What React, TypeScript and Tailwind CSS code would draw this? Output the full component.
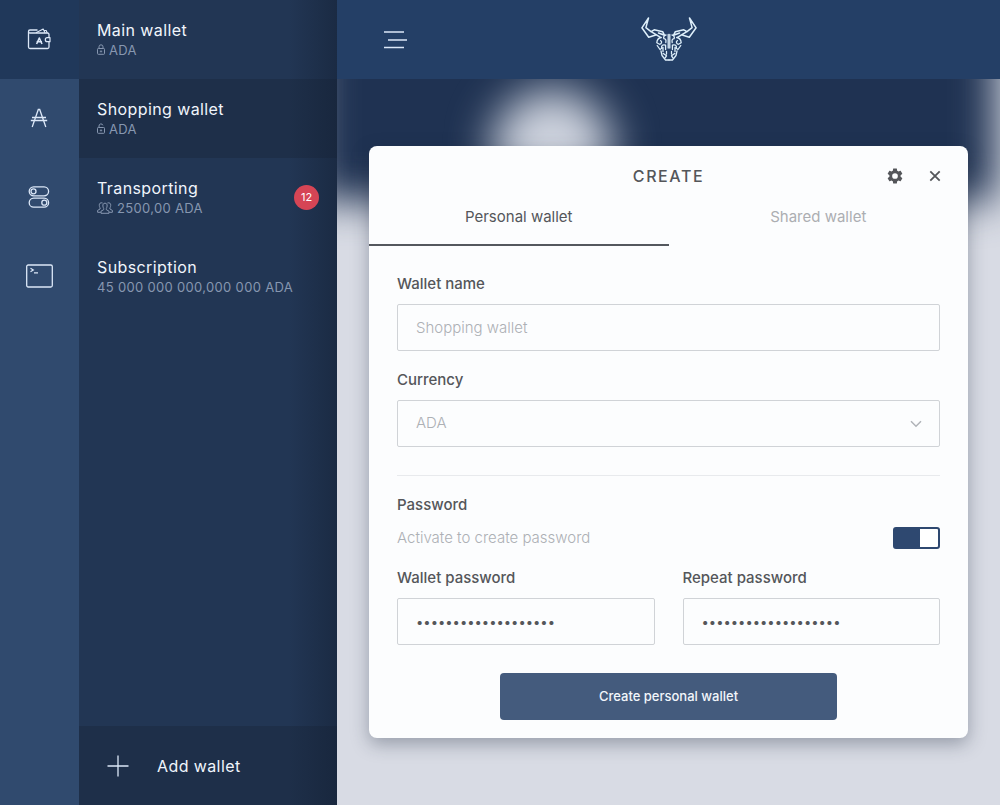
import { useState, type ReactNode } from "react";

function WalletIcon() {
  return (
    <svg width="24" height="22" viewBox="0 0 24 22" fill="none" stroke="#dce8f8" strokeWidth="1.3" strokeLinejoin="round">
      <path d="M22 9V6.500A1.500 1.500 0 0 0 20.500 5H3A1.500 1.500 0 0 1 3 2H10.500M1.500 3.500V19A1.500 1.500 0 0 0 3 20.500H20.500A1.500 1.500 0 0 0 22 19V14" />
      <path d="M9 4.800 16.200 1 18 4.800M17 2.500H19.200L20.200 5" strokeWidth="1.100" />
      <path d="M23 9.700H20.300A2 2 0 0 0 20.300 13.700H23Z" strokeWidth="1.200" />
      <path d="M9.600 16 12.300 10 15 16M9.600 13.800H15" strokeWidth="1.600" />
    </svg>
  );
}

function AdaIcon() {
  return (
    <svg width="18" height="20" viewBox="0 0 18 20" fill="none" stroke="#dce8f8" strokeWidth="1.300">
      <path d="M2.200 19 8.300 1.500H9.700L15.800 19M2 9.500H16M.8 12.500H17.200" />
    </svg>
  );
}

function TogglesIcon() {
  return (
    <svg width="22" height="22" viewBox="0 0 22 22" fill="none" stroke="#dce8f8" strokeWidth="1.300">
      <rect x="1.200" y="0.800" width="19.400" height="9" rx="4.500" />
      <circle cx="5.500" cy="5.300" r="2.500" />
      <rect x="1.200" y="12.200" width="19.400" height="9" rx="4.500" />
      <circle cx="16.300" cy="16.700" r="2.500" />
    </svg>
  );
}

function TerminalIcon() {
  return (
    <svg width="27" height="24" viewBox="0 0 27 24" fill="none" stroke="#dce8f8" strokeWidth="1.300">
      <rect x="0.700" y="1" width="25.600" height="22" rx="1.500" />
      <path d="M4.500 4.200 7.300 6 4.500 7.800M8 8.800H12" strokeWidth="1.200" />
    </svg>
  );
}

function LockIcon({ open = false }: { open?: boolean }) {
  return (
    <svg width="8" height="11" viewBox="0 0 8 11" fill="none" stroke="currentColor" strokeWidth="1">
      <rect x="0.500" y="4.500" width="7" height="5.800" rx="0.800" />
      <path d={open ? "M2 4.500V3A2 2 0 0 1 5.900 2.300" : "M2 4.500V2.800A2 2 0 0 1 6 2.800V4.500"} />
      <path d="M4 6.300V8.500M2.800 7.400H5.200" strokeWidth="0.800" />
    </svg>
  );
}

function PeopleIcon() {
  return (
    <svg width="16" height="12" viewBox="0 0 16 12" fill="none" stroke="currentColor" strokeWidth="1" strokeLinejoin="round">
      <path d="M8 1.200C6.300 1.200 5.700 2.400 5.900 4 6 5.400 6.700 6.500 6.700 6.500V7.700L4 9.200V11.300H12V9.200L9.300 7.700V6.500S10 5.400 10.100 4C10.300 2.400 9.700 1.200 8 1.200Z" />
      <path d="M5.600 1C3.500.2 2 1.500 2.300 3.500 2.400 5 3.100 6 3.100 6V7L.6 8.400V10.300H3.800M10.400 1C12.500.2 14 1.500 13.700 3.500 13.600 5 12.900 6 12.900 6V7L15.400 8.400V10.300H12.200" />
    </svg>
  );
}

function BullHalf() {
  return (
    <>
      <path d="M7.500 1 .9 10.800 7.700 20.300 15.500 17.800 19.500 20.300M7.500 1 4.900 10.600 10 14.700 13.200 12.800 21.800 14.800 23.500 18.300 17.500 16M10.500 14.800 15.500 17.800" strokeWidth="1.500" />
      <path d="M27.200 17.500V31M25 18C23 18.300 22.200 20 22.900 21.700 24.800 21.800 25.300 23.400 24.800 25.500M20.300 20.500C17.600 20.800 16 23 15.800 25.800L18.500 27.300C20.800 27 21.300 24.500 19.600 23.600M16.200 28.500 19 32.500 20.700 31.300C20 28.500 22 27.200 24.600 28.200V32.500M22 30.500V34.500M20 34 21 38.500 24.500 43H28M22.300 36.500 25.500 38.800 24.300 40.700M25.500 34.500V37" />
    </>
  );
}

function BullLogo() {
  return (
    <svg width="56" height="45" viewBox="0 0 56 45" fill="none" stroke="#dff0fb" strokeWidth="1.300" strokeLinejoin="round" strokeLinecap="round">
      <BullHalf />
      <g transform="matrix(-1 0 0 1 56 0)">
        <BullHalf />
      </g>
    </svg>
  );
}

function GearIcon() {
  return (
    <svg width="18" height="18" viewBox="0 0 24 24" fill="#54565a">
      <path d="M19.430 12.980c.04-.32.07-.64.07-.98s-.03-.66-.07-.98l2.110-1.650c.19-.15.24-.42.12-.64l-2-3.460c-.12-.22-.39-.3-.61-.22l-2.490 1c-.52-.4-1.080-.73-1.690-.98l-.38-2.650C14.460 2.180 14.250 2 14 2h-4c-.25 0-.46.18-.49.42l-.38 2.650c-.61.25-1.170.59-1.690.98l-2.490-1c-.23-.09-.49 0-.61.22l-2 3.460c-.13.22-.07.49.12.64l2.110 1.650c-.04.32-.07.65-.07.98s.03.66.07.98l-2.110 1.650c-.19.15-.24.42-.12.64l2 3.460c.12.22.39.3.61.22l2.490-1c.52.4 1.080.73 1.690.98l.38 2.650c.03.24.24.42.49.42h4c.25 0 .46-.18.49-.42l.38-2.650c.61-.25 1.170-.59 1.690-.98l2.490 1c.23.09.49 0 .61-.22l2-3.460c.12-.22.07-.49-.12-.64l-2.110-1.650zM12 15.800a3.800 3.800 0 1 1 0-7.600 3.800 3.800 0 0 1 0 7.600z" />
    </svg>
  );
}

const railItems = [
  { label: "Wallets", icon: <WalletIcon />, active: true },
  { label: "Cardano", icon: <AdaIcon />, active: false },
  { label: "Settings", icon: <TogglesIcon />, active: false },
  { label: "Console", icon: <TerminalIcon />, active: false },
];

const wallets: { name: string; detail: string; icon?: ReactNode; badge?: number; active?: boolean }[] = [
  { name: "Main wallet", detail: "ADA", icon: <LockIcon /> },
  { name: "Shopping wallet", detail: "ADA", icon: <LockIcon open />, active: true },
  { name: "Transporting", detail: "2500,00 ADA", icon: <PeopleIcon />, badge: 12 },
  { name: "Subscription", detail: "45 000 000 000,000 000 ADA" },
];

const labelClass = "block text-[15px] leading-5 font-medium text-[#54565a]";
const fieldClass =
  "mt-2.5 block h-[47px] w-full rounded-xs border border-[#d0d3d7] bg-[#fcfdfe] px-[18px] text-[#54565a] outline-none placeholder:text-[#adb0b5]";

function PasswordField({ id, label }: { id: string; label: string }) {
  return (
    <div className="min-w-0 flex-1">
      <label htmlFor={id} className={labelClass}>{label}</label>
      <input id={id} type="password" defaultValue="correcthorsebattery" className={`${fieldClass} text-[13px]`} />
    </div>
  );
}

function CreateWallet() {
  const [tab, setTab] = useState(0);
  const [secured, setSecured] = useState(true);
  return (
    <section
      aria-labelledby="create-title"
      className="relative rounded-lg bg-[#fcfdfe] shadow-[0_6px_18px_rgba(30,40,60,0.35)]"
    >
      <header className="grid h-[60px] grid-cols-[1fr_auto_1fr] items-center pr-6">
        <h1 id="create-title" className="col-start-2 pl-6 text-base font-medium tracking-widest text-[#54565a]">
          CREATE
        </h1>
        <div className="flex items-center justify-end gap-[22px]">
          <button type="button" aria-label="Settings"><GearIcon /></button>
          <button type="button" aria-label="Close" className="grid size-[18px] place-items-center">
            <svg width="12" height="12" viewBox="0 0 12 12" stroke="#54565a" strokeWidth="1.800">
              <path d="M1.300 1.300 10.700 10.700M10.700 1.300 1.300 10.700" />
            </svg>
          </button>
        </div>
      </header>
      <div role="tablist" className="grid grid-cols-2">
        {["Personal wallet", "Shared wallet"].map((name, i) => (
          <button
            key={name}
            type="button"
            role="tab"
            aria-selected={tab === i}
            onClick={() => setTab(i)}
            className={
              tab === i
                ? "h-10 border-b-2 border-[#54585e] pb-4 text-[15px] leading-5 text-[#54565a]"
                : "h-10 border-b-2 border-transparent pb-4 text-[15px] leading-5 text-[#acaeb2]"
            }
          >
            {name}
          </button>
        ))}
      </div>
      <form className="px-7 pt-7 pb-[18px]" onSubmit={(e) => e.preventDefault()}>
        <label htmlFor="wallet-name" className={labelClass}>Wallet name</label>
        <input id="wallet-name" type="text" placeholder="Shopping wallet" className={`${fieldClass} text-[15px] font-light`} />

        <label htmlFor="currency" className={`${labelClass} mt-[19px]`}>Currency</label>
        <div className="relative">
          <select
            id="currency"
            className="mt-2.5 block h-[47px] w-full appearance-none rounded-xs border border-[#d0d3d7] bg-[#fcfdfe] px-[18px] text-[15px] font-light text-[#adb0b5] outline-none"
          >
            <option>ADA</option>
          </select>
          <svg className="pointer-events-none absolute top-5 right-[18px]" width="12" height="8" viewBox="0 0 12 8" fill="none" stroke="#b0b3b8" strokeWidth="1.500">
            <path d="M1 1.200 6 6.200 11 1.200" />
          </svg>
        </div>

        <hr className="mt-7 border-[#e8eaed]" />

        <h2 className="mt-[19px] text-[15px] leading-5 font-medium text-[#54565a]">Password</h2>
        <div className="mt-3 flex items-center justify-between">
          <label htmlFor="secured" className="text-[15px] leading-5 font-light text-[#adb0b5]">Activate to create password</label>
          <input
            id="secured"
            type="checkbox"
            role="switch"
            checked={secured}
            onChange={(e) => setSecured(e.target.checked)}
            className="h-[22px] w-[47px] appearance-none rounded-[3px] border-2 border-[#2e4870] bg-white bg-linear-to-r from-[#2e4870] from-0% to-[#2e4870] bg-[length:25px_100%] bg-left bg-no-repeat not-checked:bg-right"
          />
        </div>
        <div className="mt-[19px] flex gap-7">
          <PasswordField id="password" label="Wallet password" />
          <PasswordField id="repeat" label="Repeat password" />
        </div>
        <button
          type="submit"
          className="mx-auto mt-7 block h-[47px] w-[62%] rounded-sm bg-[#445b7d] text-[13px] font-medium text-[#f2f6fb]"
        >
          Create personal wallet
        </button>
      </form>
    </section>
  );
}

export default function App() {
  return (
    <div className="flex min-h-screen bg-[#d8dbe4] font-['Inter',sans-serif]">
      <nav aria-label="Sections" className="w-[79px] shrink-0 bg-[#304a6e]">
        {railItems.map((item) => (
          <button
            key={item.label}
            type="button"
            aria-label={item.label}
            className={
              item.active
                ? "grid h-[79px] w-full place-items-center bg-[#20385a] pr-px pb-0.5"
                : "grid h-[79px] w-full place-items-center pr-px pb-0.5"
            }
          >
            {item.icon}
          </button>
        ))}
      </nav>

      <aside className="relative flex w-[258px] shrink-0 flex-col bg-[#223654]">
        <ul>
          {wallets.map((w) => (
            <li key={w.name}>
              <button
                type="button"
                className={
                  w.active
                    ? "flex h-[79px] w-full items-center justify-between bg-[#1e2f49] px-[18px] text-left"
                    : "flex h-[79px] w-full items-center justify-between px-[18px] text-left"
                }
              >
                <span>
                  <span className="block text-base leading-5 tracking-wide text-[#f0f5fc]">{w.name}</span>
                  <span className="flex items-center gap-1 text-[13px] leading-5 tracking-wide whitespace-nowrap text-[#8797b0]">
                    {w.icon}
                    {w.detail}
                  </span>
                </span>
                {w.badge && (
                  <span className="relative z-10 grid size-[25px] place-items-center rounded-full bg-[#d64555] text-[11px] text-white">
                    {w.badge}
                  </span>
                )}
              </button>
            </li>
          ))}
        </ul>
        <button type="button" className="mt-auto flex h-[79px] items-center gap-7 bg-[#1e2f49] px-7 text-base tracking-wide text-[#f0f5fc]">
          <svg width="22" height="22" viewBox="0 0 22 22" stroke="#dce8f8" strokeWidth="1.300">
            <path d="M11 .5V21.500M.5 11H21.500" />
          </svg>
          Add wallet
        </button>
        <div className="pointer-events-none absolute inset-y-0 right-0 w-12 bg-linear-to-r from-transparent to-[#131f33]/50" />
      </aside>

      <div className="flex min-w-0 flex-1 flex-col">
        <header className="grid h-[79px] grid-cols-[1fr_auto_1fr] items-center bg-[#243f66] px-[46px]">
          <button type="button" aria-label="Menu" className="justify-self-start">
            <svg width="24" height="18" viewBox="0 0 24 18" stroke="#dce8f8" strokeWidth="1.500">
              <path d="M1 1H21M5 9H24M1 16.500H21" />
            </svg>
          </button>
          <BullLogo />
        </header>
        <main className="relative flex-1 overflow-hidden px-8 pt-[67px] pb-[67px]">
          <div aria-hidden="true" className="absolute -top-16 right-1 -left-6 h-[186px] bg-[#1f3252] blur-[20px]" />
          <div aria-hidden="true" className="absolute top-2.5 left-[155px] size-[120px] rounded-full bg-[#ced3de] blur-[22px]" />
          <CreateWallet />
        </main>
      </div>
    </div>
  );
}
